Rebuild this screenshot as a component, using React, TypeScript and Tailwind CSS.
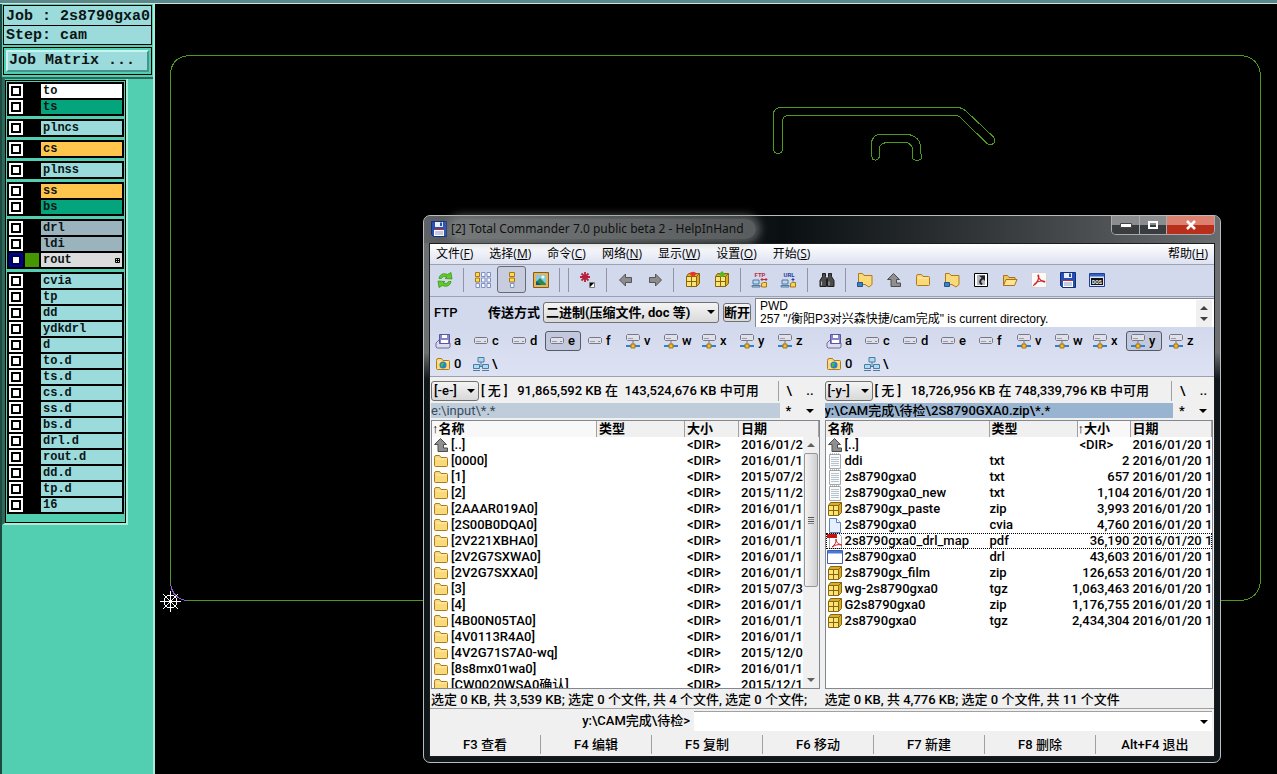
import React from 'react';

interface Layer {
  name: string;
  color: string;
  active?: boolean;
}

interface FileRow {
  icon: string;
  name: string;
  type?: string;
  size: string;
  date: string;
  focused?: boolean;
}

const AQUA = 'bg-[#9bdbdb]';
const GREEN = 'bg-[#04a57c]';
const ORANGE = 'bg-[#ffc54d]';
const STEEL = 'bg-[#9bb3bd]';

const layerGroups: Layer[][] = [
  [
    { name: 'to', color: 'bg-white' },
    { name: 'ts', color: GREEN },
  ],
  [{ name: 'plncs', color: AQUA }],
  [{ name: 'cs', color: ORANGE }],
  [{ name: 'plnss', color: AQUA }],
  [
    { name: 'ss', color: ORANGE },
    { name: 'bs', color: GREEN },
  ],
  [
    { name: 'drl', color: STEEL },
    { name: 'ldi', color: STEEL },
    { name: 'rout', color: 'bg-[#dcdcdc]', active: true },
  ],
  [
    'cvia', 'tp', 'dd', 'ydkdrl', 'd', 'to.d', 'ts.d', 'cs.d', 'ss.d', 'bs.d',
    'drl.d', 'rout.d', 'dd.d', 'tp.d', '16',
  ].map((name) => ({ name, color: AQUA })),
];

const folder = (name: string, date: string): FileRow => ({ icon: 'folder', name, size: '<DIR>', date });

const leftFiles: FileRow[] = [
  { icon: 'up', name: '[..]', size: '<DIR>', date: '2016/01/2' },
  folder('[0000]', '2016/01/1'),
  folder('[1]', '2015/07/2'),
  folder('[2]', '2015/11/2'),
  folder('[2AAAR019A0]', '2016/01/1'),
  folder('[2S00B0DQA0]', '2016/01/1'),
  folder('[2V221XBHA0]', '2016/01/1'),
  folder('[2V2G7SXWA0]', '2016/01/1'),
  folder('[2V2G7SXXA0]', '2016/01/1'),
  folder('[3]', '2015/07/3'),
  folder('[4]', '2016/01/1'),
  folder('[4B00N05TA0]', '2016/01/1'),
  folder('[4V0113R4A0]', '2016/01/1'),
  folder('[4V2G71S7A0-wq]', '2015/12/0'),
  folder('[8s8mx01wa0]', '2016/01/1'),
  folder('[CW0020WSA0确认]', '2015/12/1'),
];

const rightFiles: FileRow[] = [
  { icon: 'up', name: '[..]', size: '<DIR>', date: '2016/01/20 1' },
  { icon: 'text', name: 'ddi', type: 'txt', size: '2', date: '2016/01/20 1' },
  { icon: 'text', name: '2s8790gxa0', type: 'txt', size: '657', date: '2016/01/20 1' },
  { icon: 'text', name: '2s8790gxa0_new', type: 'txt', size: '1,104', date: '2016/01/20 1' },
  { icon: 'box', name: '2s8790gx_paste', type: 'zip', size: '3,993', date: '2016/01/20 1' },
  { icon: 'page', name: '2s8790gxa0', type: 'cvia', size: '4,760', date: '2016/01/20 1' },
  { icon: 'pdffile', name: '2s8790gxa0_drl_map', type: 'pdf', size: '36,190', date: '2016/01/20 1', focused: true },
  { icon: 'app', name: '2s8790gxa0', type: 'drl', size: '43,603', date: '2016/01/20 1' },
  { icon: 'box', name: '2s8790gx_film', type: 'zip', size: '126,653', date: '2016/01/20 1' },
  { icon: 'box', name: 'wg-2s8790gxa0', type: 'tgz', size: '1,063,463', date: '2016/01/20 1' },
  { icon: 'box', name: 'G2s8790gxa0', type: 'zip', size: '1,176,755', date: '2016/01/20 1' },
  { icon: 'box', name: '2s8790gxa0', type: 'tgz', size: '2,434,304', date: '2016/01/20 1' },
];

const menus = [
  ['文件', 'F'], ['选择', 'M'], ['命令', 'C'], ['网络', 'N'], ['显示', 'W'], ['设置', 'O'], ['开始', 'S'],
];

const toolbar = [
  'refresh', '|', 'brief', 'full', 'picture', '|', '|', 'star', '|', 'back', 'forward', '|', 'pack', 'unpack',
  '|', 'ftp', 'url', '|', 'find', '|', 'netfolder', 'up', 'folder', 'netfolder', 'shortcut', 'openfolder',
  'pdf', 'floppy', 'dos',
];

const drives = [
  ['floppydrive', 'a'], ['disk', 'c'], ['disk', 'd'], ['disk', 'e'], ['disk', 'f'],
  ['netdrive', 'v'], ['netdrive', 'w'], ['netdrive', 'x'], ['netdrive', 'y'], ['netdrive', 'z'],
];

const functionKeys = ['F3 查看', 'F4 编辑', 'F5 复制', 'F6 移动', 'F7 新建', 'F8 删除', 'Alt+F4 退出'];

const folderShape = (
  <>
    <path d="M1.5 4.5q0-2 1.5-2h3.5l1.5 2h5.5q1 0 1 1v7q0 1-1 1h-11q-1 0-1-1z" fill="#f9d978" stroke="#b07a1c" />
    <path d="M2.5 6h11" stroke="#fff0b8" />
  </>
);

const boxShape = (
  <>
    <path d="M1.500 4.500l2-3h11v10l-3 3h-10z" fill="#d9ae2a" stroke="#8a6510" />
    <path d="M2 5h9v9H2z" fill="#fae477" />
    <path d="M1.500 4.500h10v10M11.500 4.500l3-3M6.500 5v9M2 9.500h9" stroke="#8a6510" fill="none" />
  </>
);

const driveShape = (
  <path d="M2.500 4.500h11l1 1v4l-1 1h-11l-1-1v-4z" fill="#dfe0e8" stroke="#77798a" />
);

const glyphs: Record<string, React.ReactNode> = {
  folder: folderShape,
  box: boxShape,
  refresh: (
    <g fill="#62cc22" stroke="#2f8a12" strokeWidth=".7">
      <path d="M2 6.500C2.500 2.500 6.500 .5 10.500 2.500L14 .5 15 7 8 6.500 10 5Q6 3.500 4.500 6.500z" />
      <path d="M14 9.500C13.500 13.500 9.500 15.500 5.500 13.500L2 15.500 1 9 8 9.500 6 11Q10 12.500 11.500 9.500z" />
    </g>
  ),
  brief: (
    <g strokeWidth="1">
      <path d="M.5 .5h4v4h-4z" fill="#ffd94e" stroke="#a8781a" />
      <path d="M.5 6h4v4h-4z" fill="#ffd94e" stroke="#a8781a" />
      <path d="M1 11.500h3.500v4H1zM6.500 .5h3.500v4H6.500zM6.500 6h3.500v4H6.500zM6.500 11.500h3.500v4H6.500zM12 .5h3.500v4H12zM12 6h3.500v4H12zM12 11.500h3.500v4H12z" fill="#f4f6ff" stroke="#8090c0" />
    </g>
  ),
  full: (
    <g>
      <path d="M5.500 .5h5v4h-5zM5.500 6h5v4h-5z" fill="#ffd94e" stroke="#a8781a" />
      <path d="M6.500 11.500h3.500v4h-3.500z" fill="#f4f6ff" stroke="#8090c0" />
    </g>
  ),
  picture: (
    <g>
      <path d="M.5 .5h15v15H.5z" fill="#e2b75a" stroke="#8a5a16" />
      <path d="M3 3h10v10H3z" fill="#82c9e8" />
      <path d="M3 10l4-4 6 6v1H3z" fill="#2d8a4a" />
      <path d="M3 13V9l5 4z" fill="#184f86" />
      <circle cx="10" cy="5" r="1.500" fill="#fff" />
    </g>
  ),
  star: (
    <g>
      <path d="M5 0v10M0 5h10M1.500 1.500l7 7M8.500 1.500l-7 7" stroke="#b5203c" strokeWidth="1.800" />
      <path d="M9.500 10.500h5v5h-5z" fill="#fff" stroke="#777" />
      <path d="M10 11h4l-4 4z" fill="#000" />
    </g>
  ),
  back: <path d="M1.500 8l6-6v3.500h6v5h-6V14z" fill="#8c8c8c" stroke="#555" />,
  forward: <path d="M14.500 8l-6-6v3.500h-6v5h6V14z" fill="#8c8c8c" stroke="#555" />,
  pack: (
    <g>
      {boxShape}
      <path d="M8 5L4 1.500Q8-2 12 1.500z" fill="#e8342c" />
    </g>
  ),
  unpack: (
    <g>
      {boxShape}
      <path d="M8-1L12 3H9.500v2h-3V3H4z" fill="#51b824" />
    </g>
  ),
  ftp: (
    <g>
      <path d="M1 8h6v4H1zM0 15h8v-1.500H0z" fill="#b6d8f4" stroke="#50779c" />
      <path d="M9.500 11.500l2-1h3v4.500h-5z" fill="#f7d45a" stroke="#a77717" />
      <path d="M9 7.500h6M10.500 6L9 7.500 10.500 9M13.500 6L15 7.500 13.500 9" stroke="#c42838" fill="none" />
      <text x="8" y="4.500" fontSize="6" fontWeight="700" textAnchor="middle" fill="#b62a3c">FTP</text>
    </g>
  ),
  url: (
    <g>
      <path d="M1 8h6v4H1zM0 15h8v-1.500H0z" fill="#b6d8f4" stroke="#50779c" />
      <path d="M9.500 11.500l2-1h3v4.500h-5z" fill="#f7d45a" stroke="#a77717" />
      <path d="M12 9.500V6M10.500 7.500h3" stroke="#2342a0" />
      <text x="8" y="4.500" fontSize="6" fontWeight="700" textAnchor="middle" fill="#2342a0">URL</text>
    </g>
  ),
  find: (
    <g fill="#4b4b4b" stroke="#1e1e1e">
      <path d="M3.500 1.500h3v3l1 2v8h-6.500v-6l2.500-4zM9.500 1.500h3v3l2.500 4v6H8.500v-8l1-2z" />
      <path d="M2.500 9.500v4M10 9.500v4" stroke="#b8b8b8" />
    </g>
  ),
  netfolder: (
    <g>
      <path d="M1.500 1.500h4l1.500 2h8v9l-3 2.500-4-2.500h-6.500z" fill="#f9d978" stroke="#b07a1c" />
      <path d="M.5 10.500h5v4h-5z" fill="#3d7fc4" stroke="#22558c" />
    </g>
  ),
  up: <path d="M7.500 1.500l6 6h-3v3.500h4v3.500h-9.500V7.500h-3.500z" fill="#8f8f8f" stroke="#4d4d4d" />,
  shortcut: (
    <g>
      <path d="M1.500 1.500h13v13h-13z" fill="#fff" stroke="#000" />
      <path d="M4 3h8v10H4z" fill="#b4b8bc" />
      <path d="M9 12.500q-4-3 .5-6" stroke="#222" strokeWidth="2" fill="none" />
      <path d="M6 3.500h6v5.500z" fill="#222" />
    </g>
  ),
  openfolder: (
    <g>
      <path d="M1.500 13.500v-10h4l1.500 2h6v2" fill="#f2c55a" stroke="#a8741a" />
      <path d="M1.500 13.500l2.500-6h11l-2.500 6z" fill="#ffe394" stroke="#a8741a" />
    </g>
  ),
  pdf: (
    <g>
      <path d="M.5 .5h15v15H.5z" fill="#fafafa" stroke="#d5d5d5" />
      <path d="M3 13c3-2 6-7 4.500-10-1.500 0 0 5 5.500 7 2 0 0-1.500-3-1-3 .5-6 2-7 4z" stroke="#d02020" strokeWidth="1.200" fill="none" />
    </g>
  ),
  pdffile: (
    <g>
      <path d="M2.500 .5h9l3 3v12h-12z" fill="#fff" stroke="#aaa" />
      <path d="M0 1h10v4H0z" fill="#c31414" />
      <path d="M5 14c3-2 4.500-5 4-8 0 3 2 5 6 6-4-1-7 0-10 2z" stroke="#d02020" fill="none" />
    </g>
  ),
  floppy: (
    <g>
      <path d="M.5 .5h15v15h-13l-2-2z" fill="#2450b4" stroke="#142f7a" />
      <path d="M4 1h8v5H4z" fill="#e8eefc" />
      <path d="M9 1.500h2v3.500H9z" fill="#2450b4" />
      <path d="M3 8h10v7H3z" fill="#fff" />
      <path d="M3 8.500h10" stroke="#d22" />
      <path d="M4 11h8M4 13h8" stroke="#8a9ac4" />
    </g>
  ),
  dos: (
    <g>
      <path d="M.5 1.500h15v13H.5z" fill="#dfe7fa" stroke="#1f3f92" />
      <path d="M1 2h14v2.500H1z" fill="#3462c4" />
      <path d="M2 6h12v7H2z" fill="#111" />
      <text x="8" y="11.500" fontSize="5" fontWeight="700" textAnchor="middle" fill="#fff">DOS</text>
    </g>
  ),
  floppydrive: (
    <g>
      <path d="M1 10l3-3h8l3 3v4l-1 1H2l-1-1z" fill="#dcdcee" stroke="#6d6d9c" />
      <path d="M4.500 1.500h10v9h-10z" fill="#8a84c8" stroke="#5a56a0" />
      <path d="M7 2h5v3H7zM6 7h7v3H6z" fill="#fff" />
    </g>
  ),
  disk: (
    <g>
      {driveShape}
      <path d="M3 8.500h5" stroke="#9a9cab" />
      <path d="M11 8.500h2" stroke="#8a8ca0" />
    </g>
  ),
  netdrive: (
    <g>
      <path d="M2.500 1.500h11l1 1v4l-1 1h-11l-1-1v-4z" fill="#dfe0e8" stroke="#77798a" />
      <path d="M3 5.500h5" stroke="#9a9cab" />
      <path d="M8 8v4" stroke="#777" />
      <path d="M1 13h14" stroke="#2b82d0" strokeWidth="2" />
      <path d="M6 11h4v4H6z" fill="#f4b92c" stroke="#a8741a" />
    </g>
  ),
  ftpfolder: (
    <g>
      {folderShape}
      <circle cx="8" cy="9" r="3.500" fill="#2f7fc4" />
      <path d="M6 7l3 0-1 3-2 1z" fill="#4bbd3c" />
    </g>
  ),
  network: (
    <g fill="#a9dcf5" stroke="#4f7ba0">
      <path d="M5 1.500h6v4.500H5zM.5 8.500h6v4h-6zM9.500 8.500h6v4h-6z" />
      <path d="M8 6v5M0 14.500h7M9 14.500h7M6.500 10.500h3" fill="none" />
    </g>
  ),
  text: (
    <g>
      <path d="M2.500 1.500h11v14h-11z" fill="#fafafa" stroke="#a5a8ab" />
      <path d="M4 4.500h8M4 6.500h8M4 8.500h8M4 10.500h8M4 12.500h8" stroke="#b4c4ce" />
      <path d="M3 1h10" stroke="#888" strokeDasharray="1 1" />
    </g>
  ),
  page: (
    <g>
      <path d="M2.500 1.500h7l4 4v10h-11z" fill="#e6efff" stroke="#6480b8" />
      <path d="M9.500 1.500v4h4" fill="#fff" stroke="#6480b8" />
    </g>
  ),
  app: (
    <g>
      <path d="M.5 1.500h15v13H.5z" fill="#fff" stroke="#3d5fae" />
      <path d="M1 2h14v2.500H1z" fill="#4a7ad6" />
    </g>
  ),
};

const Icon = ({ name, big }: { name: string; big?: boolean }) => (
  <svg viewBox="0 0 16 16" className={big ? 'h-4 w-4 shrink-0 overflow-visible' : 'h-4 w-4 shrink-0'} fill="none" aria-hidden="true">
    {glyphs[name]}
  </svg>
);

const Caret = ({ up }: { up?: boolean }) => (
  <svg viewBox="0 0 8 4" className="h-1 w-2 shrink-0" aria-hidden="true">
    <path d={up ? 'M0 4l4-4 4 4z' : 'M0 0h8L4 4z'} fill="currentColor" />
  </svg>
);

const Sidebar = () => (
  <aside className="w-[155px] shrink-0 border-r-2 border-l-2 border-r-[#a9ecd9] border-l-[#1d4a40] bg-[#52ceb0] font-['Liberation_Mono','DejaVu_Sans_Mono',monospace] font-bold text-[#0b1414]">
    <div className="px-px pt-px">
      <div className="border border-black bg-[#9bdbdb] text-[15px] whitespace-pre">
        <div className="h-5 border-b border-black pl-0.5 leading-[22px]">Job : 2s8790gxa0</div>
        <div className="h-[18px] pl-0.5 leading-5">Step: cam</div>
      </div>
      <div className="mt-0.5 border border-black p-0.5">
        <button className="block h-[22px] w-full border-2 border-t-[#c9f3f0] border-r-[#47948c] border-b-[#47948c] border-l-[#c9f3f0] bg-[#9bdbdb] pl-px text-left text-[15px] leading-[18px]">
          Job Matrix ...
        </button>
      </div>
    </div>
    <div className="mt-0.5 h-0.5 bg-[#2d6a5c]" />
    <div className="w-[126px] border-r-2 border-b-2 border-l-[3px] border-r-[#a9ecd9] border-b-[#a9ecd9] border-l-[#2d6a5c] pt-px">
      <div className="flex flex-col gap-[3px] border border-black px-px pt-px pb-2">
        {layerGroups.map((group, i) => (
          <div key={i} className="flex flex-col gap-0.5 bg-black px-0.5 py-0.5">
            {group.map((layer) => (
              <label key={layer.name} className="flex h-3.5 items-center gap-0.5">
                <input
                  type="checkbox"
                  className={
                    layer.active
                      ? 'h-3.5 w-3.5 shrink-0 appearance-none bg-white shadow-[inset_0_0_0_2px_#0000a0,inset_0_0_0_4px_#00004a]'
                      : 'h-3.5 w-3.5 shrink-0 appearance-none bg-white shadow-[inset_0_0_0_2px_#fff,inset_0_0_0_4px_#000]'
                  }
                />
                <span className={layer.active ? 'h-3.5 w-3.5 shrink-0 bg-[#449800]' : 'h-3.5 w-3.5 shrink-0 bg-black'} />
                <span className={`flex h-3.5 flex-1 items-center justify-between px-0.5 text-[12px] leading-[14px] ${layer.color}`}>
                  {layer.name}
                  {layer.active && (
                    <svg viewBox="0 0 5 5" className="h-[5px] w-[5px]" aria-hidden="true">
                      <path d="M.5 .5h4v4h-4zM2.500 0v5M0 2.500h5" fill="none" stroke="#000" />
                    </svg>
                  )}
                </span>
              </label>
            ))}
          </div>
        ))}
      </div>
    </div>
  </aside>
);

const BoardOutline = () => (
  <svg viewBox="155 4 1122 770" className="block w-full" fill="none" stroke="#4f9a1a" shapeRendering="crispEdges" role="img" aria-label="Board outline">
    <path d="M170.500 584V74Q171.500 57 189 55.500H1241Q1258 57 1260.500 74V582Q1258 599 1241 600.500H187" />
    <path d="M170.500 584Q173 599 187 600.500" stroke="#8a5fd0" />
    <path d="M773.500 149V113Q774.500 108 780 107.500H957Q962 107.500 966 111L993.500 137Q996 141 994 143Q991 146 987 143.500L962 119Q959 115.500 955 115.500H788Q783 116 782.500 121V149Q782 153.500 778 153.500Q774 153.500 773.500 149Z" />
    <path d="M871.500 155V142Q873 135.500 879 134.500H909Q919 137 920.500 145V153Q923 156 921 159Q917 162 913 159L912.500 148Q910 143 906 142.500H886Q880 144 879.500 148V157Q876 162 872.500 159Z" />
    <g stroke="#fff">
      <circle cx="170.500" cy="601.500" r="6.500" />
      <path d="M160 601.500h21M170.500 591v21M163 594l15 15M178 594l-15 15" />
    </g>
  </svg>
);

const DriveBar = ({ active }: { active: string }) => (
  <div className="flex flex-1 flex-wrap content-start">
    {[...drives, ['ftpfolder', '0'], ['network', '\\']].map(([icon, letter]) => (
      <button
        key={letter}
        className={
          letter === active
            ? 'mr-0.5 mb-[3px] flex h-5 w-[36px] items-center gap-[3px] rounded-[3px] border border-[#555a6b] bg-[#c3c9dc] px-[3px]'
            : 'mb-[3px] flex h-5 w-[38px] items-center gap-[3px] pl-1'
        }
      >
        <Icon name={icon} />
        <span className="leading-5">{letter}</span>
      </button>
    ))}
  </div>
);

interface FilePanelProps {
  drive: string;
  space: string;
  path: string;
  files: FileRow[];
  sortBy: 'name' | 'size';
  active?: boolean;
}

const FilePanel: React.FC<FilePanelProps> = ({ drive, space, path, files, sortBy, active }) => {
  const head = 'h-4 border-r border-[#a0a0a0] bg-[#f0f0f0] p-0 pl-0.5 text-left text-[13px] font-bold leading-4 whitespace-nowrap';
  const headSorted = 'h-4 border-r border-[#a0a0a0] bg-[#f8f8f8] p-0 text-left text-[13px] font-bold leading-4 whitespace-nowrap';
  const arrow = <span className="font-['Liberation_Sans',sans-serif] font-normal">↑</span>;

  return (
    <section className="flex min-w-0 flex-1 flex-col">
      <div className="flex h-[22px] items-center">
        <span className="relative shrink-0">
          <select
            aria-label="Drive"
            className="h-5 w-[48px] appearance-none rounded-[3px] border border-[#707070] bg-linear-to-b from-[#f4f4f4] to-[#d8d8d8] pl-0.5 leading-4"
          >
            <option>{drive}</option>
          </select>
          <span className="pointer-events-none absolute top-2 right-1">
            <Caret />
          </span>
        </span>
        <span className="flex-1 overflow-hidden pl-0.5 whitespace-pre">{space}</span>
        <span className="flex h-5 w-[42px] items-center justify-between border-l border-[#a0a0a0] pr-1.5 pl-2">
          <button>\</button>
          <button>..</button>
        </span>
      </div>
      <div className="flex h-[17px] items-center">
        <div
          className={
            active
              ? 'h-[15px] flex-1 overflow-hidden bg-[#99b4d1] leading-[15px] whitespace-nowrap'
              : 'h-[15px] flex-1 overflow-hidden bg-[#bfcddb] font-normal leading-[15px] whitespace-nowrap text-[#3c4c5c]'
          }
        >
          {path}
        </div>
        <div className="flex w-10 items-center justify-between pr-1.5 pl-1.5">
          <button aria-label="Favourites">*</button>
          <button aria-label="History">
            <Caret />
          </button>
        </div>
      </div>
      <div className="relative mt-px h-[269px] overflow-hidden border border-[#828790] bg-white">
        <table className="w-full table-fixed border-separate border-spacing-0">
          <colgroup>
            <col className={active ? 'w-[164px]' : 'w-[165px]'} />
            <col className="w-[88px]" />
            <col className={active ? 'w-[53px]' : 'w-[54px]'} />
            <col />
          </colgroup>
          <thead>
            <tr>
              <th className={sortBy === 'name' ? headSorted : head}>
                {sortBy === 'name' && arrow}
                名称
              </th>
              <th className={head}>类型</th>
              <th className={sortBy === 'size' ? headSorted : head}>
                {sortBy === 'size' && arrow}
                大小
              </th>
              <th className={head}>日期</th>
            </tr>
          </thead>
          <tbody>
            {files.map((file, i) => (
              <tr key={i} className={file.focused ? 'outline-1 -outline-offset-1 outline-dotted outline-black' : ''}>
                <td className="h-4 overflow-hidden p-0 leading-4 whitespace-nowrap">
                  <span className="flex h-4 items-center gap-0.5 pl-px">
                    <Icon name={file.icon} />
                    {file.name}
                  </span>
                </td>
                <td className="h-4 p-0 leading-4">{file.type}</td>
                <td className="h-4 p-0 leading-4">
                  <span className={file.size === '<DIR>' ? 'flex h-4 pl-0.5' : 'flex h-4 justify-end pr-px'}>
                    {file.size}
                  </span>
                </td>
                <td className="h-4 overflow-hidden p-0 pl-0.5 leading-4 whitespace-nowrap">{file.date}</td>
              </tr>
            ))}
          </tbody>
        </table>
        {!active && (
          <div className="absolute top-4 right-0 bottom-0 flex w-4 flex-col items-center bg-[#f0f0f0] py-1.5 text-[#606060]">
            <Caret up />
            <div className="mt-1.5 flex h-[134px] w-3.5 flex-col items-center justify-center gap-px rounded-[2px] border border-[#979797] bg-linear-to-r from-[#f4f4f4] to-[#cfcfd2]">
              <span className="h-px w-1.5 bg-[#555]" />
              <span className="h-px w-1.5 bg-[#888]" />
              <span className="h-px w-1.5 bg-[#555]" />
              <span className="h-px w-1.5 bg-[#888]" />
            </div>
            <div className="flex-1" />
            <Caret />
          </div>
        )}
      </div>
    </section>
  );
};

const TitleBar = () => (
  <header className="flex h-[27px] items-start justify-between">
    <div className="flex h-[26px] items-center gap-1 pl-0.5">
      <Icon name="floppy" />
      <h1 className="rounded-full bg-[#8a8d8e]/60 pr-3 font-['Noto_Sans','Noto_Sans_CJK_SC',sans-serif] text-[12px] leading-5 font-normal whitespace-nowrap text-[#111] shadow-[0_0_8px_4px_rgba(138,141,142,0.6)]">
        [2] Total Commander 7.0 public beta 2 - HelpInHand
      </h1>
    </div>
    <div className="flex h-[19px] overflow-hidden rounded-b-[5px] border border-t-0 border-[#a9abad] text-white">
      <button aria-label="Minimize" className="flex w-7 items-center justify-center border-r border-[#a9abad] bg-linear-to-b from-[#8a8c8e] from-50% to-[#3a3d40] to-50%">
        <svg viewBox="0 0 12 6" className="h-1.5 w-3"><path d="M.5 1.500h11v4H.5z" fill="#fff" stroke="#444" /></svg>
      </button>
      <button aria-label="Maximize" className="flex w-[27px] items-center justify-center border-r border-[#a9abad] bg-linear-to-b from-[#8a8c8e] from-50% to-[#3a3d40] to-50%">
        <svg viewBox="0 0 12 10" className="h-2.5 w-3"><path d="M2 2h8v6H2z" fill="none" stroke="#fff" strokeWidth="2" /></svg>
      </button>
      <button aria-label="Close" className="flex w-[47px] items-center justify-center bg-linear-to-b from-[#dc8070] from-50% to-[#b8301c] to-50%">
        <svg viewBox="0 0 12 10" className="h-2.5 w-3"><path d="M2 1l8 8M10 1L2 9" stroke="#fff" strokeWidth="2.500" /></svg>
      </button>
    </div>
  </header>
);

const CommanderWindow = () => (
  <div className="absolute top-[211px] left-[268px] w-[798px] rounded-[7px] border border-[#b9bdbf] bg-linear-to-b from-[#6c6f71] from-25% to-[#10171b] to-30% px-[5px] pb-[5px] font-['Roboto','Noto_Sans_CJK_SC',sans-serif] text-[13px] leading-4 font-medium text-black">
    <div className="-mx-[5px] rounded-t-[6px] bg-linear-to-r from-[#606365] via-[#0a0f12] via-45% to-[#6a6d6f] px-[5px]">
      <TitleBar />
    </div>
    <div className="border border-[#1c1c1c] bg-[#f0f0f0]">
      <nav className="flex h-[21px] items-center gap-4 border-b border-[#9da1ad] bg-linear-to-b from-white to-[#dde2f1] px-1.5 font-['Open_Sans','Noto_Sans_CJK_SC',sans-serif] text-[12px] font-normal">
        {menus.map(([label, key]) => (
          <button key={key} className="whitespace-nowrap">
            {label}(<u>{key}</u>)
          </button>
        ))}
        <button className="ml-auto whitespace-nowrap">
          帮助(<u>H</u>)
        </button>
      </nav>
      <div className="flex h-8 items-center border-b border-[#9da1ad] bg-[#d3d9ec] pb-0.5">
        {toolbar.map((item, i) =>
          item === '|' ? (
            <span key={i} className="mx-1 h-6 w-px bg-[#8f95a5]" />
          ) : (
            <button
              key={i}
              aria-label={item}
              className={
                item === 'full'
                  ? 'flex h-[27px] w-[29px] items-center justify-center rounded-[3px] border border-[#666b78] bg-[#c7cddf]'
                  : 'flex h-[27px] w-[29px] items-center justify-center'
              }
            >
              <Icon name={item} big />
            </button>
          ),
        )}
      </div>
      <div className="flex h-[31px] items-center bg-[#d3d9ec] pl-1">
        <span className="w-[54px]">FTP</span>
        <label htmlFor="mode" className="w-[55px] font-bold whitespace-nowrap">传送方式</label>
        <span className="relative">
          <select id="mode" className="h-[21px] w-[176px] appearance-none rounded-[3px] border border-[#707070] bg-linear-to-b from-[#f4f4f4] to-[#dadada] pl-0.5 font-bold">
            <option>二进制(压缩文件, doc 等)</option>
          </select>
          <span className="pointer-events-none absolute top-2 right-1">
            <Caret />
          </span>
        </span>
        <button className="ml-1 h-[19px] w-7 rounded-[3px] border border-[#707070] bg-linear-to-b from-[#f4f4f4] to-[#dadada] font-bold leading-4 whitespace-nowrap">
          断开
        </button>
        <div className="ml-1 flex h-[29px] flex-1 justify-between border-t border-l border-[#828790] bg-white pt-px">
          <div className="pl-1 font-['Liberation_Sans','Noto_Sans_CJK_SC',sans-serif] text-[12px] leading-[13px] font-normal whitespace-nowrap">
            <div>PWD</div>
            <div>257 "/衡阳P3对兴森快捷/cam完成" is current directory.</div>
          </div>
          <div className="mr-0.5 flex w-4 flex-col items-center justify-between bg-[#f0f0f0] py-1.5 text-[#404040]">
            <Caret up />
            <Caret />
          </div>
        </div>
      </div>
      <div className="flex h-[49px] border-b border-[#9da1ad] bg-linear-to-b from-[#d3d9ec] to-[#dde2f3] px-px pt-[3px]">
        <DriveBar active="e" />
        <DriveBar active="y" />
      </div>
      <div className="flex gap-[5px] px-px pt-[3px]">
        <FilePanel
          drive="[-e-]"
          space="[ 无 ]   91,865,592 KB 在  143,524,676 KB 中可用"
          path="e:\input\*.*"
          files={leftFiles}
          sortBy="name"
        />
        <FilePanel
          drive="[-y-]"
          space="[ 无 ]   18,726,956 KB 在 748,339,796 KB 中可用"
          path="y:\CAM完成\待检\2S8790GXA0.zip\*.*"
          files={rightFiles}
          sortBy="size"
          active
        />
      </div>
      <div className="flex h-[20px] gap-[5px] border-b border-[#a0a0a0] px-px leading-[22px] whitespace-nowrap">
        <span className="min-w-0 flex-1 overflow-hidden">
          选定 0 KB, 共 3,539 KB; 选定 0 个文件, 共 4 个文件, 选定 0 个文件;
        </span>
        <span className="min-w-0 flex-1 overflow-hidden">选定 0 KB, 共 4,776 KB; 选定 0 个文件, 共 11 个文件</span>
      </div>
      <div className="flex h-6 items-center">
        <label htmlFor="command" className="w-[264px] pr-1 text-right whitespace-nowrap">
          y:\CAM完成\待检&gt;
        </label>
        <div className="mr-0.5 flex h-5 flex-1 items-center border-t border-[#a0a0a0] bg-white pr-1">
          <input id="command" className="h-full min-w-0 flex-1 bg-white outline-none" />
          <button aria-label="Command history">
            <Caret />
          </button>
        </div>
      </div>
      <div className="grid h-[23px] grid-cols-[repeat(6,111px)_1fr] items-center">
        {functionKeys.map((label) => (
          <button key={label} className="h-[19px] border-r border-[#a0a0a0] whitespace-nowrap last:border-r-0">
            {label}
          </button>
        ))}
      </div>
    </div>
  </div>
);

export default function App() {
  return (
    <div className="flex min-h-screen flex-col bg-black">
      <div className="h-1 border-b border-[#c9e6e4] bg-[#5a8788]" />
      <div className="flex flex-1">
        <Sidebar />
        <main className="relative min-w-0 flex-1 overflow-hidden">
          <BoardOutline />
          <CommanderWindow />
        </main>
      </div>
    </div>
  );
}
